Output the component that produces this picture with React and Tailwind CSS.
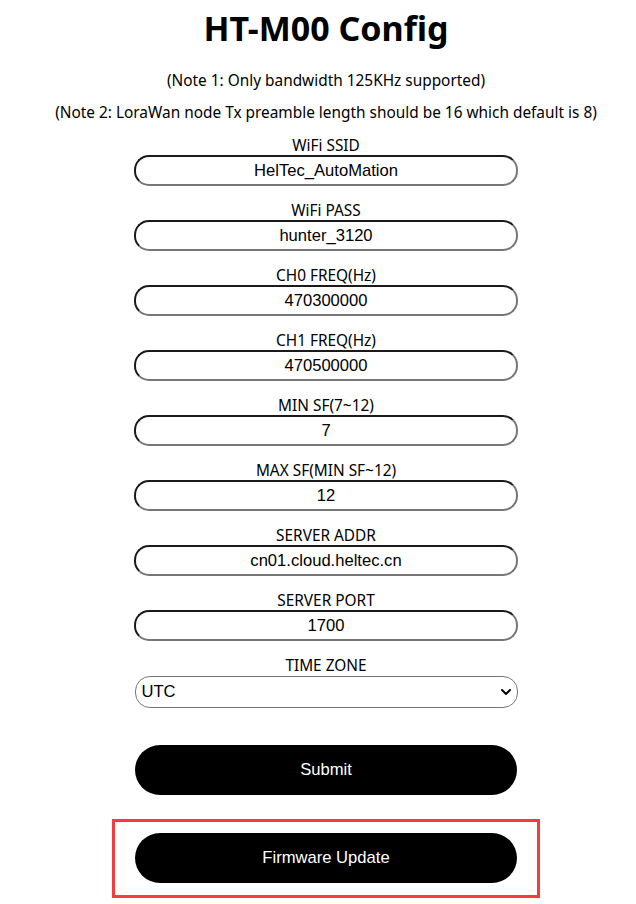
import React from "react";

const fields = [
  ["WiFi SSID", "HelTec_AutoMation"],
  ["WiFi PASS", "hunter_3120"],
  ["CH0 FREQ(Hz)", "470300000"],
  ["CH1 FREQ(Hz)", "470500000"],
  ["MIN SF(7~12)", "7"],
  ["MAX SF(MIN SF~12)", "12"],
  ["SERVER ADDR", "cn01.cloud.heltec.cn"],
  ["SERVER PORT", "1700"],
];

export default function App() {
  return (
    <div className="w-[636px] min-h-[904px] bg-white text-black flex flex-col items-center pl-[16px]" style={{ fontFamily: '"Noto Sans", sans-serif' }}>
      <h1 className="mt-[12px] text-[34px] leading-[32px] font-bold">HT-M00 Config</h1>
      <p className="mt-[26px] text-[15.4px] leading-[20px] translate-y-[1px]">(Note 1: Only bandwidth 125KHz supported)</p>
      <p className="mt-[13px] text-[15.4px] leading-[20px]">(Note 2: LoraWan node Tx preamble length should be 16 which default is 8)</p>
      <div className="mt-[12px] flex flex-col items-center w-[384px]">
        {fields.map(([label, value]) => (
          <div key={label} className="flex flex-col items-center w-full mb-[14px]">
            <div className="text-[15.4px] leading-[20px] translate-y-[1px]">{label}</div>
            <input
              readOnly
              value={value}
              className="w-[384px] h-[31px] rounded-[15px] border-2 border-t-[#1a1a1a] border-l-[#1a1a1a] border-b-[#767676] border-r-[#767676] text-center text-[16.6px] text-black outline-none"
              style={{ fontFamily: '"Liberation Sans", Arial, sans-serif' }}
            />
          </div>
        ))}
        <div className="flex flex-col items-center w-full">
          <div className="text-[15.4px] leading-[20px] translate-y-[1px]">TIME ZONE</div>
          <div
            className="mt-[1px] w-[383px] h-[32px] rounded-[15px] border border-[#767676] flex items-center justify-between pl-[6px] pr-[5px] text-[16.6px]"
            style={{ fontFamily: '"Liberation Sans", Arial, sans-serif' }}
          >
            <span>UTC</span>
            <svg width="12" height="12" viewBox="0 0 12 12" fill="none">
              <path d="M2 4 L6 8 L10 4" stroke="#000" strokeWidth="2" strokeLinecap="round" strokeLinejoin="round" />
            </svg>
          </div>
        </div>
      </div>
      <button
        className="mt-[37px] w-[382px] h-[50px] rounded-full bg-black text-white text-[16.6px]"
        style={{ fontFamily: '"Liberation Sans", Arial, sans-serif' }}
      >
        Submit
      </button>
      <div className="mt-[24px] w-[428px] border-[3px] border-[#f53c3c] px-[20px] pt-[11px] pb-[12px] flex justify-center">
        <button
          className="w-[382px] h-[50px] rounded-full bg-black text-white text-[16.6px]"
          style={{ fontFamily: '"Liberation Sans", Arial, sans-serif' }}
        >
          Firmware Update
        </button>
      </div>
    </div>
  );
}
